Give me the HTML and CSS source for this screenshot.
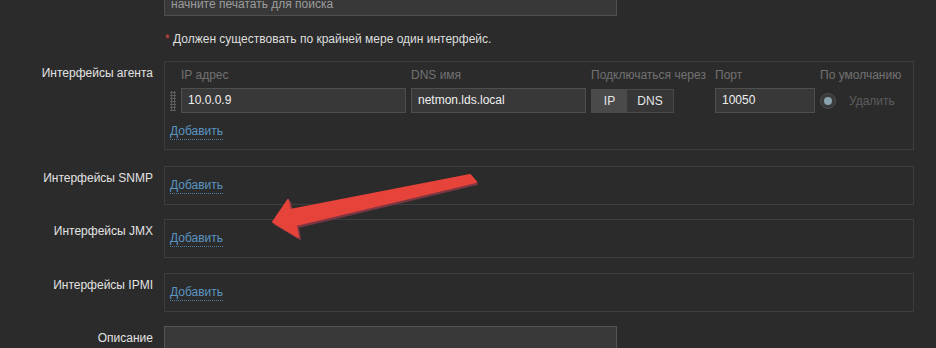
FILE: index.html
```html
<!DOCTYPE html>
<html lang="ru">
<head>
  <meta charset="UTF-8" />
  <title>Узел</title>
  <link rel="stylesheet" href="styles.css">
</head>
<body>
  <div class="page">
    <div class="form">
      <div class="row search-row">
        <div class="label"></div>
        <div class="field">
          <div class="input search">начните печатать для поиска</div>
        </div>
      </div>

      <div class="row note-row">
        <div class="label"></div>
        <div class="field note"><span class="req">*</span> Должен существовать по крайней мере один интерфейс.</div>
      </div>

      <div class="row agent-row">
        <div class="label">Интерфейсы агента</div>
        <div class="field box agent-box">
          <div class="iface-grid">
            <div></div>
            <div class="head">IP адрес</div>
            <div class="head">DNS имя</div>
            <div class="head">Подключаться через</div>
            <div class="head">Порт</div>
            <div class="head">По умолчанию</div>

            <div class="handle"></div>
            <div><div class="input ip">10.0.0.9</div></div>
            <div><div class="input dns">netmon.lds.local</div></div>
            <div class="toggle">
              <span class="toggle-btn active">IP</span>
              <span class="toggle-btn">DNS</span>
            </div>
            <div><div class="input port">10050</div></div>
            <div class="default">
              <span class="radio"></span>
              <span class="remove">Удалить</span>
            </div>
          </div>
          <a class="add agent-add" href="#">Добавить</a>
        </div>
      </div>

      <div class="row gap-16">
        <div class="label">Интерфейсы SNMP</div>
        <div class="field box small-box"><a class="add" href="#">Добавить</a></div>
      </div>

      <div class="row gap-14">
        <div class="label">Интерфейсы JMX</div>
        <div class="field box small-box"><a class="add" href="#">Добавить</a></div>
      </div>

      <div class="row gap-15">
        <div class="label">Интерфейсы IPMI</div>
        <div class="field box small-box"><a class="add" href="#">Добавить</a></div>
      </div>

      <div class="row gap-14">
        <div class="label">Описание</div>
        <div class="field">
          <div class="input textarea"></div>
        </div>
      </div>
    </div>

    <svg class="arrow" width="936" height="348" viewBox="0 0 936 348">
      <path class="arrow-shadow" d="M471 177 L292 212 L290 202 L275 224 L300 239 L298 227 L477 184 Z" />
      <path class="arrow-body" d="M470 175 L290 210 L288 200 L273 222 L298 237 L296 225 L476 182 Z" />
    </svg>
  </div>
</body>
</html>
```

FILE: styles.css
```css
body {
  margin: 0;
  background: #2b2b2b;
  font-family: "Liberation Sans", Arial, sans-serif;
  font-size: 12px;
  color: #dedede;
  overflow: hidden;
}

.page {
  position: relative;
  width: 936px;
  height: 348px;
  overflow: hidden;
}

.form {
  margin-top: -7px;
  width: 914px;
}

.row {
  display: grid;
  grid-template-columns: 153px 750px;
  column-gap: 11px;
}

.label {
  text-align: right;
  line-height: 16px;
  padding-top: 4px;
  color: #e2e2e2;
}

.note-row { margin-top: 15px; }
.agent-row { margin-top: 14px; }
.gap-16 { margin-top: 16px; }
.gap-14 { margin-top: 14px; }
.gap-15 { margin-top: 15px; }

.input {
  box-sizing: border-box;
  height: 25px;
  line-height: 23px;
  padding: 0 6px;
  background: #383838;
  border: 1px solid #4f4f4f;
  color: #f0f0f0;
  white-space: nowrap;
  overflow: hidden;
}

.search {
  width: 453px;
  height: 23px;
  line-height: 21px;
  color: #9c9c9c;
}

.note {
  line-height: 16px;
  padding-left: 1px;
}

.req { color: #d9493f; }

.box {
  border: 1px solid #3d3d3d;
}

.agent-box {
  height: 89px;
  box-sizing: border-box;
  padding: 5px 5px 0 5px;
}

.small-box {
  height: 39px;
  box-sizing: border-box;
  padding: 11px 5px 0 5px;
}

.iface-grid {
  display: grid;
  grid-template-columns: 11px 230px 180px 124px 105px 1fr;
  grid-template-rows: 16px 25px;
  row-gap: 5px;
  align-items: center;
}

.head {
  color: #727272;
  line-height: 16px;
  white-space: nowrap;
}

.handle {
  width: 6px;
  height: 20px;
  background: radial-gradient(circle, #5c5c5c 1px, transparent 1.3px) 0 0 / 3px 3px;
}

.ip { width: 225px; }
.dns { width: 175px; }
.port { width: 100px; }

.toggle {
  display: flex;
  width: 83px;
  height: 24px;
  box-sizing: border-box;
  border: 1px solid #4a4a4a;
}

.toggle-btn {
  flex: 1;
  text-align: center;
  line-height: 22px;
  background: #363636;
  color: #e6e6e6;
}

.toggle-btn.active {
  flex: 0 0 35px;
  background: #4a4a4a;
}

.default {
  display: flex;
  align-items: center;
  gap: 13px;
}

.radio {
  width: 16px;
  height: 16px;
  box-sizing: border-box;
  border-radius: 50%;
  background: #3a3a3a;
  border: 1px solid #4c4c4c;
  display: flex;
  align-items: center;
  justify-content: center;
}

.radio::after {
  content: "";
  width: 8px;
  height: 8px;
  border-radius: 50%;
  background: #8aa2ae;
}

.remove { color: #5e5e5e; }

.add {
  display: inline-block;
  line-height: 15px;
  color: #5a95c2;
  text-decoration: none;
  border-bottom: 1px dotted #4d7fa6;
}

.agent-add {
  margin-top: 11px;
}

.textarea {
  width: 453px;
  height: 40px;
  border-color: #545454;
  background: #393939;
}

.arrow {
  position: absolute;
  left: 0;
  top: 0;
  pointer-events: none;
}

.arrow-shadow {
  fill: #7a3742;
  stroke: #7a3742;
  stroke-width: 2;
  stroke-linejoin: round;
}

.arrow-body {
  fill: #e6433a;
  stroke: #e6433a;
  stroke-width: 2;
  stroke-linejoin: round;
}
```
